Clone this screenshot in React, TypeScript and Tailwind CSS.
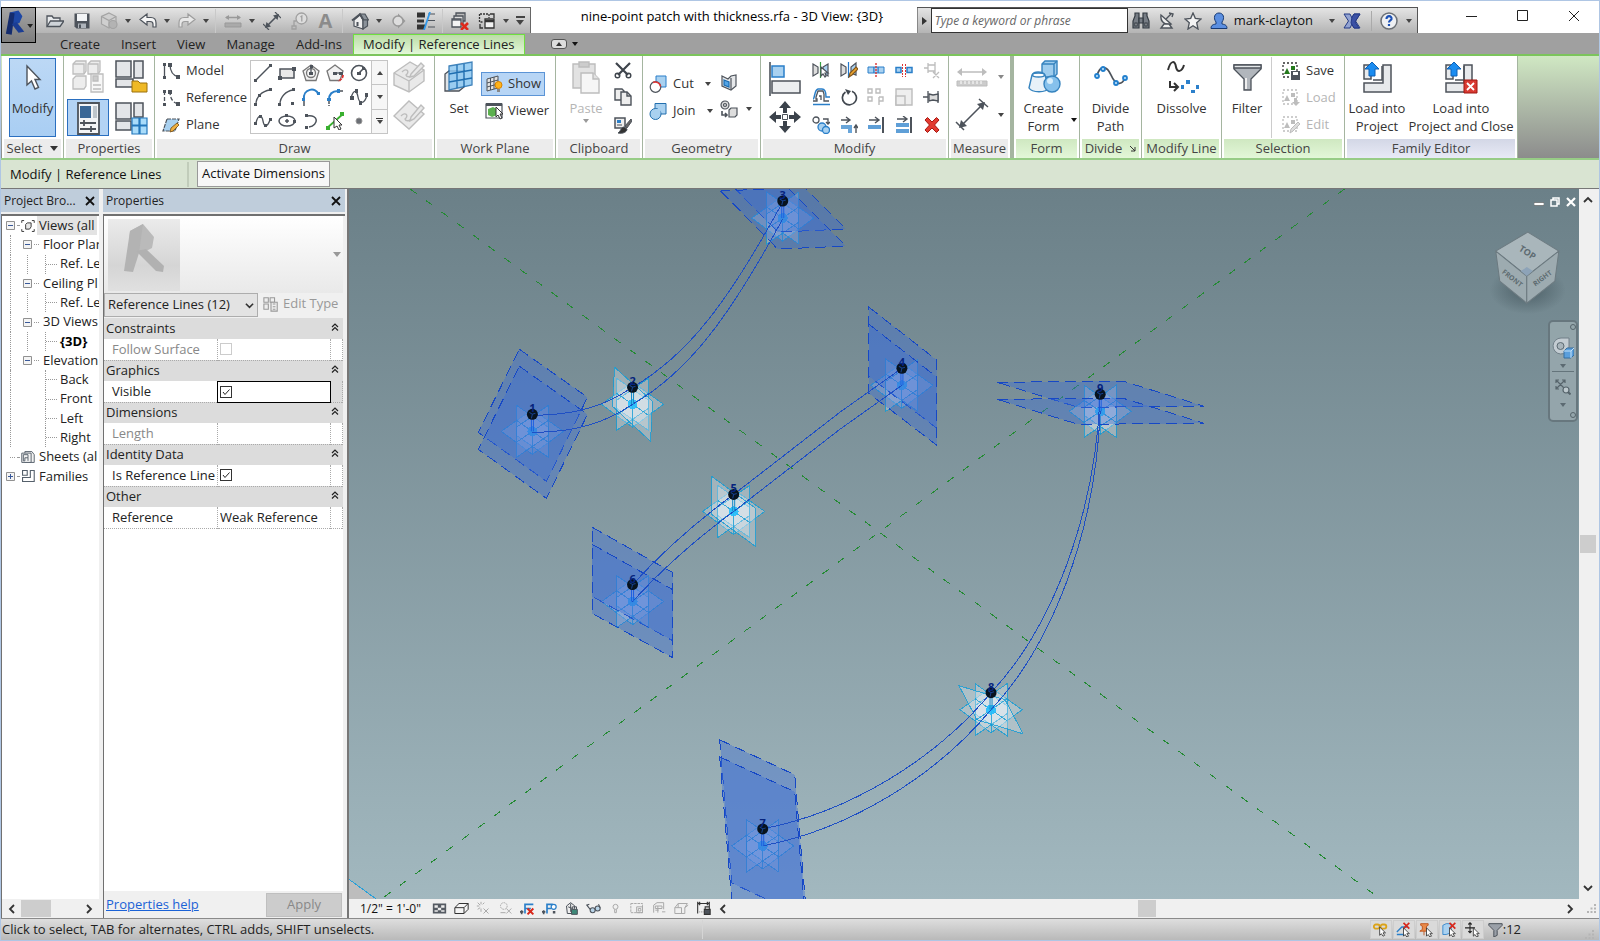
import React, { useState } from 'react';
import type { ReactNode } from 'react';

const D = '#4d535b';
const B = '#2a7fc9';
const L = '#a9d1f0';
const G = '#bdbdbd';

// Small icons are drawn on an 18x18 grid
const small: { [name: string]: ReactNode } = {
  open: <g stroke={D} strokeWidth="1.3"><path d="M1 14V4h5l1.5 2H14v3" fill="#e8eaec" /><path d="M1 14.5 4.5 9H18l-4 5.5z" fill="#cfd4d9" /></g>,
  save: <g><path d="M1.5 1.5h15v15h-13l-2-2z" fill={D} /><path d="M4 2h10v7H4z" fill="#f2f4f6" /><path d="M5 11.500h8V16H5z" fill="#aeb4bb" /><path d="M6 12.500h2V16H6z" fill={D} /></g>,
  cube: <g stroke="#a3a3a3" strokeWidth="1.2" fill="#cfcfcf"><path d="M9 1 16 4.500V12L9 16 1.500 12V4.500z" /><path d="M1.500 4.500 9 8.500l7-4M9 8.500V16" fill="none" /><circle cx="13" cy="12.500" r="4" fill="#b3b3b3" /></g>,
  undo: <path d="M1 7.500 8 2v3.500h4c3.500 0 5 2 5 5.500V15h-3v-3c0-2-1-2.500-3-2.500H8V13z" fill="#f5f5f5" stroke={D} strokeWidth="1.200" />,
  redo: <path d="M17 7.500 10 2v3.500H6c-3.500 0-5 2-5 5.500V15h3v-3c0-2 1-2.500 3-2.500h3V13z" fill="#e8e8e8" stroke="#9d9d9d" strokeWidth="1.200" />,
  dimension: <g stroke="#999" fill="#999"><path d="M2 5.500h14" strokeWidth="1.500" /><path d="M1 5.500 5 3v5zM17 5.500 13 3v5z" stroke="none" /><path d="M1 11h16v4H1z" strokeWidth="1" fill="#aaa" /></g>,
  diagonal: <g stroke={D} fill={D}><path d="M3.500 14.500l11-11" strokeWidth="1.600" /><path d="M2 16l1.500-6L8 14.500zM16 2l-6 1.500L14.500 8z" stroke="none" /><path d="M0 12l6 6M12 0l6 6" strokeWidth="1.200" /></g>,
  tag: <g stroke="#a0a0a0" fill="none" strokeWidth="1.300"><circle cx="11.500" cy="6.500" r="5.500" fill="#ddd" /><path d="M6 9H4v5M2 14h4v3H2zM10.500 5l1.300-1v5.500" /></g>,
  home: <g stroke={D} strokeWidth="1.200"><path d="M3 8 9 3l3 5v9l-9-3z" fill="#eee" /><path d="M9 2h5l3.500 6H12z" fill="#8b929a" /><path d="M12 8h4.500v6L12 17z" fill="#8b929a" /><path d="M1 8.500 9 2l3.500 6" fill="none" strokeWidth="1.800" /><path d="M6.500 10v4" strokeWidth="2" /></g>,
  section: <g><path d="M8 1.500 15.500 9 8 16.500z" fill="#999" /><circle cx="8" cy="9" r="5" fill="#ddd" stroke="#999" strokeWidth="1.500" /></g>,
  thin: <g><path d="M0 3h8M0 15h8" stroke="#333" strokeWidth="5" /><path d="M0 9h7" stroke="#333" strokeWidth="3" /><path d="M11 2h7M11 8.500h7M11 15h7" stroke={D} strokeWidth="1.200" /><path d="M13 0 7 18" stroke="#3399ea" strokeWidth="1.800" /></g>,
  closeWins: <g stroke={D} strokeWidth="1.300"><path d="M5 1h9v8H5z" fill="#bbb" /><path d="M3 4h9v8H3z" fill="#ddd" /><path d="M1 7h9v8H1z" fill="#f4f4f4" /><path d="M1 8h9" /><path d="M10 11l7 7M17 11l-7 7" stroke="#de2a1c" strokeWidth="2.500" /></g>,
  switchWins: <g stroke="#333" strokeWidth="1.300" fill="#f2f2f2"><path d="M7 7h9v9H7z" /><path d="M7 9h9" strokeWidth="2.500" /><path d="M2 2h9v4M1.500 2v8H5" strokeDasharray="2 1" fill="none" /><path d="M12 2h4v4M2 12v4h3" fill="none" /></g>,
  binoculars: <g fill="#777d85" stroke="#333a42" strokeWidth="1.200"><path d="M1 16V9l2-5V1h4v15zM17 16V9l-2-5V1h-4v15z" /><path d="M7 6h4v5H7z" /><path d="M3 11h2v3H3zM13 11h2v3h-2z" fill="#eee" /></g>,
  dish: <g stroke={D} strokeWidth="1.400" fill="#eee"><path d="M3 3c-1 6 4 11 10 9z" /><path d="M8 7l5-5M3 16h11l-3-4H6z" /><path d="M11 1l4 1-1 3" fill="none" /></g>,
  star: <path d="M9 1l2.300 5.300L17 7l-4.300 3.700L14 17l-5-3.300L4 17l1.300-6.300L1 7l5.700-.7z" fill="#f3f3f3" stroke={D} strokeWidth="1.300" />,
  user: <g stroke="#173a75" strokeWidth="1"><path d="M1 16.500c0-4 3-4 5-4.500v-2C3 6 4.500 1 9 1s6 5 3 9v2c2 .5 5 .5 5 4.500z" fill="#5c8fe0" /></g>,
  exchange: <g stroke="#243a86" strokeWidth="1"><path d="M1 2h6l2 4 2-4h6l-4.500 7 4.500 7h-6l-2-4-2 4H1l4.500-7z" fill="#93a4d2" /><path d="M9 5l2-3h6l-5 8 4 6h-5l-3-5z" fill="#3b51a5" /></g>,
  help: <g><circle cx="9" cy="9" r="8" fill="#eef0f3" stroke="#6b7076" strokeWidth="1.500" /><path d="M6.500 7c0-4 5.500-3.500 5 0-.3 1.500-2.500 1.500-2.500 3.500M9 12v2" fill="none" stroke="#1b50b5" strokeWidth="2.200" /></g>,
  model: <g stroke={D} fill="none" strokeWidth="1.300"><path d="M2.500 2v13M8 2c0 8 3 12 9 13" /><path d="M1 1h3v3H1zM1 14h3v3H1zM6 1h4v4H6zM14 13h4v4h-4z" fill={D} stroke="none" /></g>,
  reference: <g stroke={D} fill="none" strokeWidth="1.300"><path d="M2.500 2v13M8 2c0 8 3 12 9 13" strokeDasharray="4 2" /><path d="M1 1h3v3H1zM1 14h3v3H1zM6 1h4v4H6zM14 13h4v4h-4z" fill={D} stroke="none" /></g>,
  plane: <g><path d="M5 3h12l-4 12H1z" fill={L} stroke={D} strokeDasharray="4 1" strokeWidth="1.200" /><path d="M8 16l1-4 6-5 2 2-6 6z" fill="#f0b040" stroke="#754d12" strokeWidth=".8" /></g>,
  line: <g><path d="M2 16 16 2" stroke={D} strokeWidth="1.500" /><path d="M0 15h3v3H0zM15 0h3v3h-3z" fill={D} /></g>,
  rect: <g><path d="M2 5h14v9H2z" fill="#e9e9e9" stroke={D} strokeWidth="1.500" /><path d="M0 12h4v4H0zM14 3h4v4h-4z" fill={D} /></g>,
  polyIn: <g fill="none" stroke="#777" strokeWidth="1.300"><path d="M9 1l8 6-3 9.500H4L1 7z" fill="#f2f2f2" /><circle cx="9" cy="9" r="4.500" /><path d="M9 3v6" stroke={D} /><path d="M7 8h4v3H7zM8 1h3v3H8z" fill={D} stroke="none" /></g>,
  polyOut: <g fill="none" stroke="#777" strokeWidth="1.300"><path d="M9 1l8 6-3 9.500H4L1 7z" fill="#f2f2f2" /><path d="M9 9h6" stroke={D} /><path d="M7 8h4v3H7zM13 8h4v3h-4z" fill={D} stroke="none" /><path d="M17 11c0 3-2 5-5 6" stroke="#e03030" strokeWidth="1.800" strokeDasharray="3 1" /></g>,
  circle: <g fill="none" stroke={D} strokeWidth="1.600"><circle cx="9" cy="9" r="7.500" /><path d="M9 9l5-5" /><path d="M7 8h4v3H7zM12 3h3v3h-3z" fill={D} stroke="none" /></g>,
  arcSer: <g fill="none" stroke={D} strokeWidth="1.400"><path d="M2 16C2 9 8 3 16 2" /><path d="M0 15h3v3H0zM15 0h3v3h-3zM4 6h3v3H4z" fill={D} stroke="none" /></g>,
  arcCenter: <g fill="none" stroke={D} strokeWidth="1.400"><path d="M2 16C2 9 8 3 15 2" /><path d="M0 15h3v3H0zM14 0h3v3h-3zM13 14h3v3h-3z" fill={D} stroke="none" /></g>,
  tangent: <g fill="none" strokeWidth="1.500"><path d="M2 12C0 0 15-1 16 6" stroke={B} strokeWidth="2" /><path d="M2 13v5" stroke={D} /><path d="M0 10h3v3H0zM15 4h3v3h-3z" fill={B} /></g>,
  fillet: <g fill="none" strokeWidth="1.500"><path d="M3 12C3 6 6 3 12 3" stroke={B} strokeWidth="2" /><path d="M3 13v5M14 3h4" stroke={D} strokeDasharray="3 1" /><path d="M1 10h4v3H1zM11 1h3v4h-3z" fill={B} /></g>,
  spline: <g fill="none" stroke={D} strokeWidth="1.300"><path d="M1 10C4 0 7 3 8 9s6 9 9-2" /><path d="M0 8h4v4H0zM5 1h3v4H5zM9 13h3v4H9zM15 5h3v4h-3z" fill={D} stroke="none" /></g>,
  splinePts: <g fill="none" stroke={D} strokeWidth="1.400"><path d="M2 11C4 2 8 3 9 9s4 7 7-1" /><path d="M0 10h3v3H0zM5 3h3v3H5zM10 12h3v3h-3zM15 6h3v3h-3z" fill={D} stroke="none" /></g>,
  ellipse: <g fill="none" stroke={D} strokeWidth="1.500"><ellipse cx="9" cy="9" rx="8" ry="5" /><path d="M7 9h4M9 7v4" /><path d="M7 2h3v3H7zM15 8h3v3h-3z" fill={D} stroke="none" /></g>,
  partEllipse: <g fill="none" stroke={D} strokeWidth="1.500"><path d="M5 4c12-2 12 9 2 11" /><path d="M3 2h3v3H3zM3 14h3v3H3z" fill={D} stroke="none" /></g>,
  pick: <g><path d="M1 16 17 2" stroke="#39b02f" strokeWidth="1.800" /><path d="M0 14h4v4H0zM14 0h4v4h-4z" fill="#39b02f" /><path d="M8 5v11l3-2 2 4 2-1-2-4h3z" fill="#fff" stroke="#333" /></g>,
  point: <circle cx="9" cy="9" r="3" fill="#6b6f75" stroke="#999" />,
  show: <g stroke={D} fill="#e2e2e2"><path d="M2 4l11-3v12L2 16z" /><path d="M5.500 3v12M9 2v12M2 8l11-3M2 12l11-3" /><circle cx="13.500" cy="10" r="3.500" fill="#ffb31a" stroke="#d98200" /><path d="M12 14h3v3h-3z" fill="#888" stroke="none" /></g>,
  viewer: <g><path d="M1 2h16v14H1z" fill="#fff" stroke={D} strokeWidth="1.200" /><path d="M1 1h16v3H1z" fill={D} /><path d="M3 7l5-2 4 2v6l-5 2-4-2z" fill="#5cb04f" /><path d="M11 5v10l2-2 2 4 2-1-2-4h3z" fill="#fff" stroke="#333" /></g>,
  cut: <g stroke="#3e444c" strokeWidth="1.400" fill="none"><path d="M2 2l12 12M16 2 4 14" strokeWidth="2.200" /><circle cx="3.500" cy="14.500" r="2.300" /><circle cx="14.500" cy="14.500" r="2.300" /></g>,
  copy: <g stroke={D} strokeWidth="1.400" fill="#eee"><path d="M1 1h7l2 2v9H1z" /><path d="M7 4h6l4 4v9H7z" /><path d="M13 4v4h4" fill="none" /></g>,
  brush: <g stroke={D}><path d="M1 2h10v10H1z" fill="#eee" strokeWidth="1.500" /><path d="M3 4h4v3H3z" fill={B} stroke="none" /><path d="M3 9h5" /><path d="M17 3 11 10l2 2 5-7z" fill="#666" /><path d="M10 11c-3 0-3 4-6 6 5 1 9-1 9-4z" fill="#333" /></g>,
  cutGeo: <g><path d="M7 1h10v11H7z" fill={L} stroke={B} /><circle cx="6.500" cy="12" r="5.300" fill="#fff" stroke={D} strokeWidth="1.200" /><path d="M4 7.500a5.300 5.300 0 0 1 7.500 4" fill="none" stroke="#e23535" strokeWidth="1.600" /></g>,
  joinGeo: <g fill={L} stroke="#226fae"><path d="M6 1.500h11V12H6z" /><circle cx="6.500" cy="12" r="5.500" /><path d="M7 7h4.500v4.500H7z" stroke="none" /></g>,
  face: <g stroke={D} strokeWidth="1.200"><path d="M2 3l6 3 3-3 5-1v11l-5 4-9-4z" fill="#e6e8ea" /><path d="M11 5v11" /><path d="M4 7l5 2v5l-5-2z" fill="#52a4e6" stroke="#1a6bb0" /></g>,
  paint: <g stroke={D} fill="#ddd" strokeWidth="1.200"><circle cx="5" cy="5" r="4" /><circle cx="5" cy="5" r="1.500" /><path d="M9 10l2-2h6v7l-2 2H9z" /><path d="M2 11v4h4M5 13l2 2-2 2" fill="none" strokeWidth="1.600" /></g>,
  mirrorPick: <g stroke={D} strokeWidth="1.200" fill="#ddd"><path d="M1 3l5 3v6l-5 3z" /><path d="M16 3l-5 3v6l5 3z" fill={L} /><path d="M8.500 1v16" stroke="#35a043" /><path d="M9 6v9l2-2 2 3 1-1-1-3h3z" fill="#fff" /></g>,
  mirrorDraw: <g stroke={D} strokeWidth="1.200" fill="#ddd"><path d="M1 3l5 3v6l-5 3z" /><path d="M16 2l-5 4v6l5 2z" fill={L} /><path d="M8.500 1v16" stroke="#2277cc" /><path d="M9 16l1-4 6-6 2 2-6 6z" fill="#eea72f" stroke="#82551b" /></g>,
  split: <g><path d="M1 6h6v6H1zM11 6h6v6h-6z" fill={L} stroke={B} /><path d="M7 6h4v6H7z" fill={L} stroke={B} /><path d="M9 2v14" stroke="#d33" strokeWidth="1.400" strokeDasharray="2 1" /></g>,
  splitGap: <g><path d="M1 6.500h5v5H1zM12 6.500h5v5h-5z" fill={L} stroke={B} strokeWidth="1.500" /><path d="M7.500 3v13M10.500 3v13" stroke="#d33" strokeDasharray="2 1" /></g>,
  unpin: <g stroke={G} fill="none" strokeWidth="1.300"><path d="M1 7h4M5 2v10M12 1v12M5 4h7M5 10h7M10 11l6 6M16 11l-6 6" /></g>,
  offset: <g fill="none" strokeWidth="1.300"><path d="M1 13h4v-2H4V9l2-6h5l1 3v7h5" stroke={D} /><path d="M1 16.500h17M1 11c2 0 1-9 5-10h4c3 0 4 3 4 8h4" stroke={B} strokeWidth="1.500" /><path d="M7 8h2v4" stroke={D} /></g>,
  rotate: <g fill="none" stroke="#41474f" strokeWidth="1.700"><path d="M5.500 4A7 7 0 1 0 12 3.300" /><path d="M5 1l6 2-3 4z" fill="#41474f" stroke="none" /></g>,
  array: <g fill="none" stroke={G} strokeWidth="1.400"><path d="M1 1h4v4H1zM9 1h4v4H9zM1 9h4v4H1zM12 9v8M12 9h4v4h-4" /></g>,
  scale: <g fill="#eee" stroke={G} strokeWidth="1.400"><path d="M1 1h16v16H1z" /><path d="M1 8h9v9H1z" /></g>,
  pin: <g stroke={D} fill="#ddd" strokeWidth="1.300"><path d="M0 9h5M5 3v12M15 3v12" /><path d="M6 6l4 1 5-1v7l-5-1-4 1z" /></g>,
  copyGeo: <g fill="none" strokeWidth="1.300"><circle cx="4" cy="4" r="3" stroke={D} /><path d="M11 3h5v4M14 6l2 2 2-2" stroke={D} /><circle cx="10" cy="11" r="4" fill={L} stroke={B} /><circle cx="14" cy="14" r="3.500" fill={L} stroke={B} /></g>,
  trim: <g><path d="M1 4h8M6 1l4 3-4 3" stroke={D} fill="none" strokeWidth="1.400" /><path d="M1 9h11v8H8v-4H1z" fill={B} opacity=".7" /><path d="M16 17v-7M14 12l2-3 2 3" stroke={D} fill="none" strokeWidth="1.400" /></g>,
  trimOne: <g><path d="M2 4h9M8 1l4 3-4 3" stroke={D} fill="none" strokeWidth="1.400" /><path d="M1 9h13v4H1z" fill={B} opacity=".75" /><path d="M15 1h2v16h-2z" fill={D} /></g>,
  trimMany: <g><path d="M2 3h9M8 0l4 3-4 3" stroke={D} fill="none" strokeWidth="1.400" /><path d="M1 7h13v4H1zM1 13h13v4H1z" fill={B} opacity=".75" /><path d="M15 1h2v16h-2z" fill={D} /></g>,
  remove: <path d="M2 4l2.500-2.500L9 6l4.500-4.500L16 4l-4.500 5 4.500 5-2.500 2.500L9 12l-4.500 4.500L2 14l4.500-5z" fill="#e23a30" stroke="#a8170f" />,
  selSave: <g><path d="M1 1h14v14H1z" fill="none" stroke="#333" strokeWidth="1.300" strokeDasharray="2 2" /><path d="M2 12l3-6 3 6z" fill="#257a1d" /><path d="M9 4h4v4H9z" fill="#257a1d" /><path d="M9 9h9v9H9z" fill={D} /><path d="M11 10h5v3h-5z" fill="#fff" /></g>,
  selLoad: <g><path d="M1 1h14v14H1z" fill="none" stroke={G} strokeWidth="1.300" strokeDasharray="2 2" /><path d="M2 12l3-6 3 6zM9 4h4v4H9zM12 9h3v4h3l-4 4-4-4h2z" fill={G} /></g>,
  selEdit: <g><path d="M1 1h14v14H1z" fill="none" stroke={G} strokeWidth="1.300" strokeDasharray="2 2" /><path d="M2 12l3-6 3 6zM9 4h4v4H9z" fill={G} /><path d="M8 17l1-4 7-7 2 2-7 7z" fill="#ddd" stroke={G} /></g>,
  views: <g fill="none" stroke="#333" strokeWidth="1.200"><path d="M1 5V2h3M14 2h3v3M1 13v3h3M14 16h3v-3" /><path d="M6 7l2-2h5v5l-2 3H6z" fill="#e8e8e8" /></g>,
  sheets: <g fill="#f2f2f2" stroke="#55606b" strokeWidth="1.200"><path d="M5 2h9l3 4v10H5z" /><path d="M1 4h12v12H1z" /><path d="M3 6h6v4H5v4H3zM9 10v4" fill="none" /></g>,
  families: <g fill="none" stroke="#55606b" strokeWidth="1.400"><path d="M2 2h6v6H2zM2 11h10V2h5v14H2z" /></g>,
  editType: <g fill="#eee" stroke="#999" strokeWidth="1.200"><path d="M1 2h5v5H1zM8 2h5v5H8zM1 9h5v6H1z" /><path d="M9 7h7v10H9zM11 9h3M11 12h3M11 15h3" /></g>,
  detail: <g fill="#555b63"><path d="M1 3h16v12H1z" /><path d="M3 5h4v3H3zM11 5h4v3h-4zM7 8h4v3H7zM3 11h4v2H3zM11 11h4v2h-4z" fill="#eee" /></g>,
  visual: <path d="M1 8l5-5h11v7l-5 5H1zM1 8h11v7M12 8l5-5" fill="#f5f5f5" stroke="#333" strokeWidth="1.200" />,
  sun: <g stroke="#aaa" strokeWidth="1.200" fill="none"><path d="M6 1v3M1 6h3M2 2l3 3M10 2 8 4M2 10l3-2M6 9v4" /><path d="M9 9l6 6M15 9l-6 6" /></g>,
  shadow: <g stroke="#aaa" strokeWidth="1.200" fill="none"><circle cx="7" cy="6" r="4" strokeDasharray="2 1" /><path d="M3 14h6M10 9l6 6M16 9l-6 6" /></g>,
  crop: <g fill="none" strokeWidth="2"><path d="M6 15V4h10M6 9h7" stroke={B} /><path d="M0 13h4M2 11v5" stroke={D} /><path d="M9 9l7 7M16 9l-7 7" stroke="#d8281c" strokeWidth="2.400" /></g>,
  cropShow: <g fill="none" strokeWidth="2"><path d="M6 15V4h7M6 9h5" stroke={B} /><path d="M0 13h4M2 11v5" stroke={D} /><circle cx="14" cy="7" r="3" fill="#fff" stroke={B} strokeWidth="1.500" /><path d="M13 12h3v3h-3z" fill={D} /></g>,
  lockView: <g stroke={D} strokeWidth="1.200" fill="#eee"><path d="M3 6l5-4 5 4-2 9H4z" /><path d="M5 7l5 2M8 3v10" /><path d="M9 10h7v6H9z" fill="#3e8878" /><path d="M10 10V7h5v3" fill="none" /></g>,
  glasses: <g fill="#b9d4e8" stroke={D} strokeWidth="1.300"><circle cx="8" cy="11" r="3" /><circle cx="14" cy="9" r="3" /><path d="M5 10 1 5l3-1M17 8l-2-4" fill="none" /></g>,
  bulb: <g fill="none" stroke="#aaa" strokeWidth="1.200"><circle cx="9" cy="7" r="3" /><path d="M8 10v4h2v-4" /></g>,
  worksheet: <g fill="none" stroke="#aaa" strokeWidth="1.200"><path d="M1 3h14v11H1z" strokeDasharray="3 1" /><path d="M8 7h7v7H8zM10 9h3v3h-3z" /></g>,
  analytic: <g fill="none" stroke="#aaa" strokeWidth="1.200"><path d="M2 14V5l4-3h8v8M4 6h8v3H4zM4 11h4M7 6v8M12 13h4" /></g>,
  boxes: <g fill="none" stroke="#aaa" strokeWidth="1.200"><path d="M1 8l4-5h11l-3 5v7H1zM1 8h8v7M5 8V3M13 8l4-3" /></g>,
  constrain: <g fill="none" stroke="#333" strokeWidth="1.300"><path d="M2 1v14M16 1v6M3 3h12M5 1 3 3l2 2M13 1l2 2-2 2" /><path d="M4 13h5" stroke="#999" strokeDasharray="1 1" /><path d="M10 10h7v6h-7z" fill={D} /><path d="M11 10V7h5v3" /></g>,
  stLinks: <g><rect x="1" y="3" width="7" height="5" rx="2.500" stroke="#dba319" strokeWidth="2.200" /><rect x="9" y="3" width="7" height="5" rx="2.500" stroke="#dba319" strokeWidth="2.200" /><path d="M8 6v10l2-2 2 3 2-1-2-3h3z" fill="#fff" stroke="#333" /></g>,
  stUnder: <g><path d="M1 12l6-6h7M1 15h10" stroke={B} fill="none" strokeWidth="1.600" /><path d="M9 1l7 7M16 1 9 8" stroke="#d8281c" strokeWidth="2" /><path d="M9 7v10l2-2 2 3 2-1-2-3h3z" fill="#fff" stroke="#333" /></g>,
  stPin: <g><path d="M2 2h9v2L9 5v4l3 2H1l3-2V5L2 4zM6 11v5" fill="#e98a4a" stroke="#bd4c12" /><path d="M9 7v10l2-2 2 3 2-1-2-3h3z" fill="#fff" stroke="#333" /></g>,
  stFace: <g><path d="M1 4l4-2h6v11l-6 2H1z" fill={L} stroke={B} /><path d="M9 1l7 7M16 1 9 8" stroke="#d8281c" strokeWidth="2" /><path d="M9 7v10l2-2 2 3 2-1-2-3h3z" fill="#fff" stroke="#333" /></g>,
  stDrag: <g><path d="M6 1v12M0 7h12M4 3l2-2 2 2M4 11l2 2 2-2" stroke="#222" fill="none" strokeWidth="1.300" /><path d="M10 7v10l2-2 2 3 2-1-2-3h3z" fill="#fff" stroke="#333" /></g>,
  stFilter: <path d="M1 2h16v2l-6 6v6l-4 2v-8L1 4z" fill="#9aa0a8" stroke={D} strokeWidth="1.200" />,
};

// Large icons are drawn on a 34x34 grid
const large: { [name: string]: ReactNode } = {
  cursor: <path d="M11 5v19l4.500-4 3.500 8 3.500-1.500-3.500-8h5z" fill="#fff" stroke={D} strokeWidth="1.400" />,
  typeProps: <g fill="#ededed" stroke={G} strokeWidth="1.300"><path d="M2 5l3-3h10v10l-2 3H2zM17 5l3-3h9v10l-2 3H17zM2 20l3-3h10v10l-2 3H2z" /><path d="M2 5h11v10M17 5h10v9" fill="none" /><path d="M20 15h12v18H20z" fill="#f7f7f7" /><path d="M22 17h5v5h-5zM22 26h8M22 30h8" fill="#ccc" /></g>,
  famCat: <g stroke={D} strokeWidth="1.500" fill="#e3e5e8"><path d="M2 2h15v16H2z" /><path d="M2 20h17v8H2z" /><path d="M20 2h9v17h-9z" /><path d="M18 22h6l2 2h7v9H18z" fill="#efb926" stroke="#9b700d" strokeWidth="1" /></g>,
  propsPane: <g><path d="M7 2h21v31H7z" fill="#f3f4f6" stroke={D} strokeWidth="1.800" /><path d="M9 5h11v12H9z" fill="#3a6796" /><path d="M22 5h4v12h-4z" fill="#bfc6cc" /><path d="M9 22h16M9 28h16M13 19v6M20 25v6" stroke={D} strokeWidth="1.800" /></g>,
  famTypes: <g stroke={D} strokeWidth="1.500" fill="#e3e5e8"><path d="M2 2h15v16H2z" /><path d="M2 20h15v9H2z" /><path d="M20 2h9v14h-9z" /><g fill="#a9dcfa" stroke="#2377bb" strokeWidth="1.200"><path d="M18 17h7v7h-7zM26 17h7v7h-7zM18 25h7v8h-7zM26 25h7v8h-7z" /></g></g>,
  drawFace: <g fill="#e9e9e9" stroke={G} strokeWidth="1.400"><path d="M2 13 18 2l14 8v11L17 32 2 25z" /><path d="M2 13l15 8 15-11M17 21v11" fill="none" /><path d="M10 12c5-5 8 0 4 3 1 3 5 2 8-1" fill="none" /><path d="M19 14 29 3l3 3-10 10-4 1z" /></g>,
  drawPlane: <g fill="#e9e9e9" stroke={G} strokeWidth="1.400"><path d="M2 18 17 3l15 13-15 15z" /><path d="M9 18c5-5 8 0 4 3 1 3 5 2 8-1" fill="none" /><path d="M19 19 29 7l3 3-10 11-4 2z" /></g>,
  set: <g stroke="#1f6eb0" strokeWidth="1.300"><path d="M3 14l4-3h15v16l-5 4H3z" fill="#dfe3e6" stroke={D} /><path d="M7 6l23-4v23L7 30z" fill="#8dc8f2" opacity=".85" /><path d="M15 5v23M22 4v23M7 14l23-4M7 22l23-4" fill="none" /></g>,
  paste: <g fill="#e2e2e2" stroke={G} strokeWidth="1.400"><path d="M4 4h22v24H4z" /><path d="M10 2h10v5H10z" fill="#ccc" /><path d="M12 13h12l6 6v14H12z" fill="#f6f6f6" /><path d="M24 13v6h6" /></g>,
  align: <g><path d="M2 0v34" stroke={D} strokeWidth="1.600" /><path d="M4 4h12v11H4z" fill={L} stroke={B} strokeWidth="1.500" /><path d="M4 19h28v12H4z" fill="#eceef0" stroke={D} strokeWidth="1.500" /></g>,
  move: <g fill="#3b424b"><path d="M17 1l6 7h-4v5h-4V8h-4zM17 33l6-7h-4v-5h-4v5h-4zM1 17l7-6v4h5v4H8v4zM33 17l-7-6v4h-5v4h5v4z" /><path d="M14.500 14.500h5v5h-5z" fill="#fff" stroke={D} /></g>,
  measure: <g stroke={G} fill={G}><path d="M4 12h26" strokeWidth="1.500" /><path d="M2 12l5-4v8zM32 12l-5-4v8z" stroke="none" /><path d="M2 21h30v5H2z" strokeWidth="1" fill="#ccc" /><path d="M6 21v3M10 21v3M14 21v3M18 21v3M22 21v3M26 21v3" stroke="#fff" /></g>,
  aligned: <g stroke={D} fill={D}><path d="M6 28 28 6" strokeWidth="1.600" /><path d="M4 30l2-8 6 6zM30 4l-8 2 6 6z" stroke="none" /><path d="M1 24l8 8M24 1l9 8" strokeWidth="1.500" /></g>,
  form: <g stroke="#3683be" strokeWidth="1.400"><path d="M15 4l3-3h12v13l-3 3H15z" fill="#9fcdee" /><path d="M15 4h12v13M27 4l3-3" fill="none" /><path d="M5 15c2-4 10-4 13 0l4 13c-3 5-17 5-20 0z" fill="#e8f1f8" /><ellipse cx="11.500" cy="15" rx="6" ry="2" fill="#fff" /><circle cx="25" cy="24" r="8" fill="#86c1ec" /><circle cx="23" cy="21" r="3" fill="#d6edfb" stroke="none" /></g>,
  divide: <g fill="none" stroke={D} strokeWidth="1.800"><path d="M3 16C6 4 13 6 17 15s10 12 14 3" /><g fill="#bfe1fa" stroke="#2380ce"><circle cx="3" cy="16" r="2" /><circle cx="9" cy="9" r="2" /><circle cx="22" cy="23" r="2" /><circle cx="31" cy="18" r="2" /></g></g>,
  dissolve: <g fill="none" stroke="#333" strokeWidth="2"><path d="M3 10C6-1 10 1 11 7s6 5 8-2" /><path d="M5 21v6h7M9 23l4 4-4 4" /><g fill="#2c80cb" stroke="none"><path d="M16 25h3v4h-3zM21 20h4v4h-4zM26 30h4v3h-4zM31 25h3v4h-3z" /></g></g>,
  filter: <g stroke={D} strokeWidth="1.300"><path d="M4 5h27v4L21 19v11h-7V19L4 9z" fill="#b1b6bc" /><path d="M4 5h27v3H4z" fill="#e5e8ea" /><path d="M16 18v11" stroke="#eee" strokeWidth="2" /></g>,
  load: <g stroke={D} strokeWidth="1.500" fill="#e8eaec"><path d="M4 5h7v14H4zM23 5h8v27H4v-9h19z" fill="#e8eaec" /><path d="M13 20h9V6" fill="none" /><path d="M12 2l7 7h-4v7H9V9H5z" fill="#1b8cf0" stroke="#0e61b5" strokeWidth="1" /></g>,
  loadClose: <g stroke={D} strokeWidth="1.500" fill="#e8eaec"><path d="M2 5h7v14H2zM20 5h8v27H2v-9h18z" fill="#e8eaec" /><path d="M11 20h9V6" fill="none" /><path d="M10 2l7 7h-4v7H7V9H3z" fill="#1b8cf0" stroke="#0e61b5" strokeWidth="1" /><path d="M20 20h13v13H20z" fill="#d93a32" stroke="#9e1610" strokeWidth="1" /><path d="M23 23l7 7M30 23l-7 7" stroke="#fff" strokeWidth="1.800" /></g>,
};

function Icon({ name, className = 'w-[18px] h-[18px]' }: { name: string; className?: string }) {
  return <svg viewBox="0 0 18 18" className={`${className} shrink-0`} fill="none" aria-hidden="true">{small[name]}</svg>;
}

function BigIcon({ name }: { name: string }) {
  return <svg viewBox="0 0 34 34" className="w-[34px] h-[34px] shrink-0" fill="none" aria-hidden="true">{large[name]}</svg>;
}

function Caret({ color = '#444', className = '' }: { color?: string; className?: string }) {
  return <svg viewBox="0 0 6 4" className={`w-[6px] h-[4px] shrink-0 ${className}`} aria-hidden="true"><path d="M0 0h6L3 4z" fill={color} /></svg>;
}

function Chevron({ dir, className = 'w-[10px] h-[10px]' }: { dir: 'left' | 'right' | 'up' | 'down'; className?: string }) {
  const d = { left: 'M7 1 3 5l4 4', right: 'M3 1l4 4-4 4', up: 'M1 7l4-4 4 4', down: 'M1 3l4 4 4-4' }[dir];
  return <svg viewBox="0 0 10 10" className={`${className} shrink-0`} fill="none" stroke="#333" strokeWidth="1.800" aria-hidden="true"><path d={d} /></svg>;
}

const quickAccess = ['open', 'save', 'cube', '>', 'undo', '>', 'redo', '>', '|', 'dimension', '>', 'diagonal', 'tag', 'A', '|', 'home', '>', 'section', 'thin', '|', 'closeWins', 'switchWins', '>'];

function TitleBar() {
  return (
    <header className="flex h-8 shrink-0 items-end bg-white">
      <div className="relative w-[35px] self-stretch">
        <button aria-label="Application menu" className="absolute top-[6px] left-0 z-10 flex h-9 w-[35px] items-center border border-black bg-linear-to-b from-[#a5a5a5] to-[#7d7d7d]">
          <svg viewBox="0 0 34 34" className="w-[34px] h-[34px]" aria-hidden="true">
            <path d="M8 4 17 2l4 6-3 7-7 2z" fill="#1d47a5" />
            <path d="M8 4 13 5 10 27l-6-1z" fill="#142c6e" />
            <path d="M10 16l5-2 8 10-6 1z" fill="#1b3d93" />
            <path d="M26 16h6l-3 4z" fill="#222" />
          </svg>
        </button>
      </div>
      <div className="flex h-[26px] items-center border-t border-r border-[#666] bg-linear-to-b from-[#e4e4e4] to-[#b4b4b4] pl-[5px] pr-[2px]">
        {quickAccess.map((item, i) => {
          if (item === '>') return <button key={i} aria-label="More" className="flex w-3 justify-center"><Caret /></button>;
          if (item === '|') return <span key={i} className="mx-[3px] h-6 w-px bg-[#c9c9c9]" />;
          if (item === 'A') return <button key={i} aria-label="Text" className="w-[27px] text-center text-[20px] leading-[22px] font-bold text-[#8b8b8b]">A</button>;
          return <button key={i} aria-label={item} className="flex w-[27px] justify-center"><Icon name={item} /></button>;
        })}
        <button aria-label="Customize" className="flex w-4 flex-col items-center gap-[2px]">
          <span className="h-[2px] w-[9px] bg-[#444]" />
          <svg viewBox="0 0 8 5" className="w-2 h-[5px]"><path d="M0 0h8L4 5z" fill="#444" /></svg>
        </button>
      </div>
      <h1 className="flex-1 self-center pl-4 text-center text-[13px] text-black">nine-point patch with thickness.rfa - 3D View: &#123;3D&#125;</h1>
      <div className="flex h-[26px] items-center border-t border-r border-[#555] bg-linear-to-b from-[#e4e4e4] to-[#b4b4b4]">
        <button aria-label="Collapse search" className="flex h-full w-[14px] items-center justify-center border-l border-[#888]">
          <svg viewBox="0 0 5 8" className="h-2 w-[5px]"><path d="M0 0l5 4-5 4z" fill="#333" /></svg>
        </button>
        <input aria-label="Search" placeholder="Type a keyword or phrase" className="h-[25px] w-[197px] border border-[#333] bg-white px-[3px] text-[12px] italic placeholder:text-[#666]" />
        <button aria-label="Find" className="flex w-[26px] justify-center"><Icon name="binoculars" /></button>
        <button aria-label="Communication center" className="flex w-[26px] justify-center"><Icon name="dish" /></button>
        <button aria-label="Favorites" className="flex w-[26px] justify-center"><Icon name="star" /></button>
        <button className="flex items-center gap-[6px] px-1 text-[13px] text-[#111]"><Icon name="user" />mark-clayton<Caret className="ml-[10px]" /></button>
        <button aria-label="Exchange" className="flex w-[26px] justify-center"><Icon name="exchange" /></button>
        <span className="ml-[6px] h-5 w-px bg-[#aaa]" />
        <button aria-label="Help" className="ml-2 flex items-center gap-2 pr-[5px]"><Icon name="help" /><Caret /></button>
      </div>
      <div className="flex h-full w-[181px] items-center justify-end pb-[2px]">
        <button aria-label="Minimize" className="flex w-[51px] justify-center"><svg viewBox="0 0 12 12" className="w-3 h-3" stroke="#222" fill="none"><path d="M0 6.500h11" /></svg></button>
        <button aria-label="Maximize" className="flex w-[51px] justify-center"><svg viewBox="0 0 12 12" className="w-3 h-3" stroke="#222" fill="none"><path d="M.5.5h10v10H.5z" /></svg></button>
        <button aria-label="Close" className="flex w-[51px] justify-center"><svg viewBox="0 0 12 12" className="w-3 h-3" stroke="#222" fill="none"><path d="M1 1l10 10M11 1 1 11" /></svg></button>
      </div>
    </header>
  );
}

function TabBar() {
  return (
    <nav className="flex h-[21px] shrink-0 items-end bg-[#a0a0a0] pl-[59px] text-[13px] leading-[19px] text-[#222]">
      <div className="flex gap-[21px] pr-[11px]">
        {['Create', 'Insert', 'View', 'Manage', 'Add-Ins'].map(tab => <button key={tab}>{tab}</button>)}
      </div>
      <button className="h-5 border-x border-t border-[#6fe03f] bg-linear-to-b from-[#bcdca8] to-[#e3f8d8] px-[9px]">Modify | Reference Lines</button>
      <button aria-label="Minimize ribbon" className="mb-[5px] ml-[26px] flex h-[10px] w-4 items-center justify-center rounded-[3px] border border-[#555] bg-[#ddd]">
        <svg viewBox="0 0 6 4" className="w-[6px] h-1"><path d="M0 4h6L3 0z" fill="#333" /></svg>
      </button>
      <button aria-label="Ribbon options" className="mb-2 ml-[5px]"><Caret color="#111" /></button>
    </nav>
  );
}

type PanelTone = 'gray' | 'green' | 'blue';

function Panel({ title, className, tone = 'gray', children }: { title: ReactNode; className: string; tone?: PanelTone; children: ReactNode }) {
  const footer = { gray: 'bg-[#ececec]', green: 'bg-linear-to-b from-[#cfe8c1] to-[#e3f7d8]', blue: 'bg-linear-to-b from-[#d3d7e6] to-[#e8eaf6]' }[tone];
  return (
    <section className={`flex shrink-0 flex-col border-r border-[#a5b5a0] bg-white px-[2px] ${className}`}>
      <div className="flex min-h-0 flex-1">{children}</div>
      <h2 className={`flex h-[19px] items-center justify-center gap-2 text-[13px] leading-[19px] whitespace-nowrap text-[#444] ${footer}`}>{title}</h2>
    </section>
  );
}

function TallButton({ icon, lines, className, disabled = false, caret = false }: { icon: string; lines: string[]; className: string; disabled?: boolean; caret?: boolean }) {
  return (
    <button disabled={disabled} className={`flex flex-col items-center pt-1 text-[13px] leading-[18px] ${disabled ? 'text-[#b5b5b5]' : 'text-[#333]'} ${className}`}>
      <BigIcon name={icon} />
      <span className="mt-[5px] flex flex-col items-center">
        {lines.map(line => <span key={line} className="whitespace-nowrap">{line}</span>)}
      </span>
      {caret && <Caret color="#999" className="mt-[2px]" />}
    </button>
  );
}

const drawTools = ['line', 'rect', 'polyIn', 'polyOut', 'circle', 'arcSer', 'arcCenter', 'tangent', 'fillet', 'spline', 'splinePts', 'ellipse', 'partEllipse', 'pick', 'point'];
const modifyTools = ['mirrorPick', 'mirrorDraw', 'split', 'splitGap', 'unpin', 'offset', 'rotate', 'array', 'scale', 'pin', 'copyGeo', 'trim', 'trimOne', 'trimMany', 'remove'];

function Ribbon() {
  return (
    <div className="flex h-[106px] shrink-0 border-t-2 border-b-2 border-[#7cc45c] border-b-[#97cc86] bg-linear-to-b from-[#d0e8c3] to-[#8c8c8c] pl-px">
      <Panel className="w-[62px]" title={<>Select <svg viewBox="0 0 8 5" className="w-2 h-[5px]"><path d="M0 0h8L4 5z" fill="#333" /></svg></>}>
        <button className="mx-auto mt-[2px] flex h-[79px] w-[47px] flex-col items-center border border-[#2a6fc0] bg-linear-to-b from-[#bcd8f5] to-[#a9cef3] pt-[2px] text-[13px] text-[#333]">
          <BigIcon name="cursor" />
          <span className="mt-1">Modify</span>
        </button>
      </Panel>
      <Panel className="w-[91px]" title="Properties">
        <div className="grid w-full grid-cols-2 place-items-center">
          <button aria-label="Type properties" disabled><BigIcon name="typeProps" /></button>
          <button aria-label="Family category"><BigIcon name="famCat" /></button>
          <button aria-label="Properties palette" className="flex h-[37px] w-[42px] items-center justify-center border border-[#2a6fc0] bg-[#b3d3f4]"><BigIcon name="propsPane" /></button>
          <button aria-label="Family types"><BigIcon name="famTypes" /></button>
        </div>
      </Panel>
      <Panel className="w-[280px]" title="Draw">
        <div className="flex w-[93px] flex-col pt-px pl-[5px] text-[13px] text-[#333]">
          {[['model', 'Model'], ['reference', 'Reference'], ['plane', 'Plane']].map(([icon, text]) => (
            <button key={text} className="flex h-[27px] items-center gap-[6px]"><Icon name={icon} />{text}</button>
          ))}
        </div>
        <div className="mt-1 flex h-[74px] w-[138px] border border-[#c5c5c5]">
          <div className="grid w-[120px] grid-cols-5 place-items-center">
            {drawTools.map(tool => <button key={tool} aria-label={tool}><Icon name={tool} /></button>)}
          </div>
          <div className="flex flex-1 flex-col divide-y divide-[#c5c5c5] border-l border-[#c5c5c5] bg-[#f6f6f6]">
            <button aria-label="Scroll up" className="flex flex-1 items-center justify-center"><Caret className="rotate-180" /></button>
            <button aria-label="Scroll down" className="flex flex-1 items-center justify-center"><Caret /></button>
            <button aria-label="Expand" className="flex flex-1 flex-col items-center justify-center gap-px"><span className="h-px w-[7px] bg-[#333]" /><Caret /></button>
          </div>
        </div>
        <div className="flex flex-col gap-1 pt-1 pl-1">
          <BigIcon name="drawFace" />
          <BigIcon name="drawPlane" />
        </div>
      </Panel>
      <Panel className="w-[121px]" title="Work Plane">
        <TallButton icon="set" lines={['Set']} className="w-11" />
        <div className="flex w-16 flex-col gap-[3px] pt-4 text-[13px] text-[#333]">
          <button className="flex h-6 items-center gap-[5px] border border-[#5b94d6] bg-[#b7d5f5] pl-[3px]"><Icon name="show" />Show</button>
          <button className="flex h-6 items-center gap-[5px] pl-1"><Icon name="viewer" />Viewer</button>
        </div>
      </Panel>
      <Panel className="w-[87px]" title="Clipboard">
        <TallButton icon="paste" lines={['Paste']} className="w-[56px]" disabled caret />
        <div className="flex flex-col justify-around">
          {['cut', 'copy', 'brush'].map(name => <button key={name} aria-label={name}><Icon name={name} /></button>)}
        </div>
      </Panel>
      <Panel className="w-[118px]" title="Geometry">
        <div className="flex flex-1 flex-col gap-[3px] pt-4 pl-1 text-[13px] text-[#333]">
          <button className="flex h-6 items-center gap-[6px]"><Icon name="cutGeo" />Cut<Caret className="ml-[5px]" /></button>
          <button className="flex h-6 items-center gap-[6px]"><Icon name="joinGeo" />Join<Caret className="ml-[5px]" /></button>
        </div>
        <div className="flex w-[38px] flex-col gap-[3px] pt-[14px]">
          <button aria-label="Split face" className="flex h-6 items-center"><Icon name="face" /></button>
          <button aria-label="Paint" className="flex h-6 items-center gap-2"><Icon name="paint" /><Caret /></button>
        </div>
      </Panel>
      <Panel className="w-[188px]" title="Modify">
        <div className="flex w-11 flex-col items-center justify-center gap-1">
          <button aria-label="Align"><BigIcon name="align" /></button>
          <button aria-label="Move"><BigIcon name="move" /></button>
        </div>
        <div className="grid flex-1 grid-cols-5 place-items-center">
          {modifyTools.map(tool => <button key={tool} aria-label={tool}><Icon name={tool} /></button>)}
        </div>
      </Panel>
      <Panel className="w-[65px] border-r-4 border-[#9aa594]" title="Measure">
        <div className="flex flex-col gap-1 pt-1 pl-1">
          <button aria-label="Measure" className="flex items-center gap-[9px]"><BigIcon name="measure" /><Caret color="#888" /></button>
          <button aria-label="Aligned dimension" className="flex items-center gap-[9px]"><BigIcon name="aligned" /><Caret /></button>
        </div>
      </Panel>
      <Panel className="w-[66px]" tone="green" title="Form">
        <TallButton icon="form" lines={['Create', 'Form']} className="w-[55px]" />
        <Caret className="mt-[62px]" color="#111" />
      </Panel>
      <Panel className="w-[62px]" tone="green" title={<>Divide <svg viewBox="0 0 6 6" className="w-[6px] h-[6px]" stroke="#333" fill="none"><path d="M0 0l5 5M5 1v4H1" /></svg></>}>
        <TallButton icon="divide" lines={['Divide', 'Path']} className="flex-1" />
      </Panel>
      <Panel className="w-[80px]" tone="green" title="Modify Line">
        <TallButton icon="dissolve" lines={['Dissolve']} className="flex-1" />
      </Panel>
      <Panel className="w-[123px]" tone="green" title="Selection">
        <TallButton icon="filter" lines={['Filter']} className="w-[46px]" />
        <div className="my-px ml-px flex flex-1 flex-col border-l border-[#ccc] pl-[10px] text-[13px]">
          <button className="flex h-[27px] items-center gap-[6px] text-[#333]"><Icon name="selSave" />Save</button>
          <button disabled className="flex h-[27px] items-center gap-[6px] text-[#b5b5b5]"><Icon name="selLoad" />Load</button>
          <button disabled className="flex h-[27px] items-center gap-[6px] text-[#b5b5b5]"><Icon name="selEdit" />Edit</button>
        </div>
      </Panel>
      <Panel className="w-[173px]" tone="blue" title="Family Editor">
        <TallButton icon="load" lines={['Load into', 'Project']} className="w-[60px]" />
        <TallButton icon="loadClose" lines={['Load into', 'Project and Close']} className="flex-1" />
      </Panel>
    </div>
  );
}

interface TreeNode {
  text: string;
  depth: number;
  icon?: string;
  box?: '-' | '+';
  bold?: boolean;
}

const tree: TreeNode[] = [
  { text: 'Views (all', depth: 0, icon: 'views', box: '-' },
  { text: 'Floor Plar', depth: 1, box: '-' },
  { text: 'Ref. Le', depth: 2 },
  { text: 'Ceiling Pl', depth: 1, box: '-' },
  { text: 'Ref. Le', depth: 2 },
  { text: '3D Views', depth: 1, box: '-' },
  { text: '{3D}', depth: 2, bold: true },
  { text: 'Elevation', depth: 1, box: '-' },
  { text: 'Back', depth: 2 },
  { text: 'Front', depth: 2 },
  { text: 'Left', depth: 2 },
  { text: 'Right', depth: 2 },
  { text: 'Sheets (al', depth: 0, icon: 'sheets' },
  { text: 'Families', depth: 0, icon: 'families', box: '+' },
];

function ExpandBox({ sign }: { sign: '-' | '+' }) {
  return (
    <svg viewBox="0 0 9 9" className="w-[9px] h-[9px] shrink-0" aria-hidden="true">
      <path d="M.5.5h8v8h-8z" fill="#f4f4f4" stroke="#919191" />
      <path d={sign === '+' ? 'M2 4.500h5M4.500 2v5' : 'M2 4.500h5'} stroke="#3a5a9a" />
    </svg>
  );
}

function PaneHeader({ text }: { text: string }) {
  return (
    <div className="flex h-[23px] shrink-0 items-center justify-between bg-[#bfcddb] pr-1 pl-[3px] text-[12px] text-[#222]">
      <h2 className="whitespace-nowrap">{text}</h2>
      <button aria-label={`Close ${text}`}>
        <svg viewBox="0 0 10 10" className="w-[10px] h-[10px]" stroke="#111" strokeWidth="1.800"><path d="M1 1l8 8M9 1 1 9" /></svg>
      </button>
    </div>
  );
}

function ProjectBrowser() {
  return (
    <aside className="flex w-[98px] shrink-0 flex-col bg-[#f0f0f0]">
      <PaneHeader text="Project Bro..." />
      <div className="mt-[2px] min-h-0 flex-1 overflow-hidden border-t-2 border-l border-[#707070] bg-white">
        <ul className="grid h-[270px] grid-rows-14 text-[13px] text-[#222]">
          {tree.map((node, i) => (
            <li key={i} className="flex items-center whitespace-nowrap">
              {node.depth === 0 && <span className="flex w-[35px] shrink-0 items-center gap-[2px] pl-1">
                {node.box ? <ExpandBox sign={node.box} /> : <span className="ml-1 w-[5px] border-t border-dotted border-[#999]" />}
                <span className="w-[2px] border-t border-dotted border-[#999]" />
                <Icon name={node.icon!} className="w-[14px] h-[14px]" />
              </span>}
              {node.depth === 1 && <span className="flex h-full w-[39px] shrink-0 items-center gap-[2px] pl-2">
                <span className="h-full w-[11px] border-l border-dotted border-[#999]" />
                <ExpandBox sign="-" />
                <span className="w-[5px] border-t border-dotted border-[#999]" />
              </span>}
              {node.depth === 2 && <span className="flex h-full w-[56px] shrink-0 items-center pl-2">
                <span className={`h-full border-l border-dotted border-[#999] ${i < 7 ? 'w-[17px]' : 'w-[35px]'}`} />
                {i < 7 && <span className="h-full w-[18px] border-l border-dotted border-[#999]" />}
                <span className="h-full border-l border-dotted border-[#999]" />
                <span className="w-[11px] border-t border-dotted border-[#999]" />
              </span>}
              <span className={`px-[2px] ${i === 0 ? 'bg-[#e3e3e3]' : ''} ${node.bold ? 'font-bold text-black' : ''}`}>{node.text}</span>
            </li>
          ))}
        </ul>
      </div>
      <div className="flex h-[19px] items-center border-l border-[#707070] px-[5px]">
        <button aria-label="Scroll left"><Chevron dir="left" /></button>
        <span className="ml-1 h-[17px] w-[30px] bg-[#cdcdcd]" />
        <button aria-label="Scroll right" className="ml-auto"><Chevron dir="right" /></button>
      </div>
    </aside>
  );
}

interface Property {
  label: string;
  kind: 'check' | 'text';
  value?: string;
  checked?: boolean;
  disabled?: boolean;
  active?: boolean;
}

const groups: { title: string; row: Property }[] = [
  { title: 'Constraints', row: { label: 'Follow Surface', kind: 'check', disabled: true } },
  { title: 'Graphics', row: { label: 'Visible', kind: 'check', checked: true, active: true } },
  { title: 'Dimensions', row: { label: 'Length', kind: 'text', value: '', disabled: true } },
  { title: 'Identity Data', row: { label: 'Is Reference Line', kind: 'check', checked: true } },
  { title: 'Other', row: { label: 'Reference', kind: 'text', value: 'Weak Reference' } },
];

function CheckField({ id, initial, disabled }: { id: string; initial: boolean; disabled?: boolean }) {
  const [checked, setChecked] = useState(initial);
  return (
    <span className="relative block h-3 w-3">
      <input
        id={id}
        type="checkbox"
        checked={checked}
        disabled={disabled}
        onChange={(e) => setChecked(e.target.checked)}
        className="block h-3 w-3 appearance-none border border-[#333] bg-white disabled:border-[#ccc]"
      />
      {checked && <svg viewBox="0 0 12 12" className="pointer-events-none absolute inset-0 w-3 h-3" fill="none" stroke="#222"><path d="M3 6l2 2.500L9.500 3.500" /></svg>}
    </span>
  );
}

function PropertiesPane() {
  return (
    <aside className="ml-1 flex w-[242px] shrink-0 flex-col bg-[#f0f0f0]">
      <PaneHeader text="Properties" />
      <div className="mt-[2px] flex min-h-0 flex-1 flex-col border-t-2 border-l border-[#707070] pr-[2px]">
        <div className="flex h-[77px] shrink-0 items-center justify-between bg-linear-to-b from-white to-[#e9e9e9] pr-[2px] pl-1">
          <svg viewBox="0 0 72 72" className="w-[72px] h-[72px]" aria-hidden="true">
            <defs>
              <linearGradient id="thumb" x1="0" y1="0" x2="0" y2="1"><stop offset="0" stopColor="#ebebeb" /><stop offset=".65" stopColor="#d5d5d5" /><stop offset="1" stopColor="#e0e0e0" /></linearGradient>
            </defs>
            <path d="M0 0h72v72H0z" fill="url(#thumb)" />
            <path d="M22 12l13-7 11 13-2 11-6 3-18 2z" fill="#bababa" />
            <path d="M22 12l-6 40 9 1 6-19 4-29z" fill="#b3b3b3" />
            <path d="M28 32l10-2 18 17-1 6-7-1z" fill="#b1b1b1" />
          </svg>
          <svg viewBox="0 0 8 5" className="w-2 h-[5px]"><path d="M0 0h8L4 5z" fill="#999" /></svg>
        </div>
        <div className="flex h-[25px] shrink-0 items-start">
          <div className="relative h-6 w-[154px]">
            <select aria-label="Type selector" className="block h-full w-full appearance-none border border-[#adadad] bg-[#e3e3e3] px-[3px] text-[13px] text-[#222]">
              <option>Reference Lines (12)</option>
            </select>
            <span className="pointer-events-none absolute top-2 right-1"><Chevron dir="down" className="w-[9px] h-[9px]" /></span>
          </div>
          <button disabled className="flex h-[22px] flex-1 items-center gap-1 pl-[5px] text-[13px] whitespace-nowrap text-[#999]"><Icon name="editType" className="w-4 h-4" />Edit Type</button>
        </div>
        <div className="flex-1 bg-white">
          <table className="w-full table-fixed border-collapse text-[13px] leading-[19px] text-[#222]">
            <colgroup><col /><col className="w-[113px]" /><col className="w-[12px]" /></colgroup>
            {groups.map(({ title, row }) => (
              <tbody key={title}>
                <tr className="h-[21px] bg-[#dcdcdc]">
                  <th colSpan={2} className="p-0 pl-[2px] text-left font-normal">{title}</th>
                  <td className="p-0">
                    <button aria-label={`Collapse ${title}`} className="block pb-1">
                      <svg viewBox="0 0 8 8" className="w-2 h-2" fill="none" stroke="#222" strokeWidth="1.200"><path d="M1 4l3-3 3 3M1 7.500l3-3 3 3" /></svg>
                    </button>
                  </td>
                </tr>
                <tr className="h-[21px] border-b border-dotted border-[#aaa]">
                  <td className={`p-0 pl-2 whitespace-nowrap ${row.disabled ? 'text-[#888]' : ''}`}><label htmlFor={row.label}>{row.label}</label></td>
                  <td className={`border-x p-0 pl-[2px] ${row.active ? 'border border-solid border-black' : 'border-dotted border-[#aaa]'}`}>
                    {row.kind === 'check'
                      ? <CheckField id={row.label} initial={!!row.checked} disabled={row.disabled} />
                      : <input id={row.label} defaultValue={row.value} disabled={row.disabled} className="block h-[18px] w-full bg-transparent" />}
                  </td>
                  <td className={`border-r border-dotted border-[#aaa] p-0 ${row.active ? 'bg-[#dcdcdc]' : ''}`} />
                </tr>
              </tbody>
            ))}
          </table>
        </div>
        <div className="flex h-[27px] shrink-0 items-center justify-between pr-px pl-[2px] text-[13px]">
          <a href="#help" className="text-[#1b62d6] underline">Properties help</a>
          <button disabled className="h-6 w-[76px] border border-[#bfbfbf] bg-[#cccccc] text-[#888]">Apply</button>
        </div>
      </div>
    </aside>
  );
}

type Pt = [number, number];

interface Station {
  id: number;
  x: number;
  y: number;
  plane?: Pt[];
  extra?: string;
}

const stations: Station[] = [
  { id: 1, x: 533, y: 432, plane: [[520, 350], [588, 398], [547, 482], [479, 433]] },
  { id: 2, x: 633, y: 405, extra: '-18,-37 20,-3 18,37 -20,2' },
  { id: 3, x: 783, y: 219, plane: [[721, 175], [778, 233], [846, 230], [788, 172]] },
  { id: 4, x: 902, y: 386, plane: [[869, 308], [937, 361], [937, 429], [869, 377]] },
  { id: 5, x: 734, y: 512, extra: '-22,-35 22,-3 22,35 -22,3' },
  { id: 6, x: 633, y: 602, plane: [[593, 528], [673, 573], [673, 641], [593, 597]] },
  { id: 7, x: 763, y: 846, plane: [[720, 740], [795, 775], [807, 918], [732, 883]] },
  { id: 8, x: 991, y: 710, extra: '-32,-24 14,-10 32,24 -14,10' },
  { id: 9, x: 1100, y: 412, plane: [[997, 383], [1123, 382], [1204, 407], [1078, 408]] },
];

const curves = [
  'M533 416C575 416 605 407 633 388C690 355 730 300 783 203',
  'M902 369L840 413L734 495C700 520 665 550 633 585',
  'M763 829C850 812 935 760 991 693C1050 630 1095 520 1100 395',
];

const joinPts = (pts: Pt[], dy: number) => pts.map(([x, y]) => `${x},${y + dy}`).join(' ');

function Scene() {
  return (
    <svg viewBox="349 190 1230 709" preserveAspectRatio="xMidYMid slice" className="absolute inset-0 h-full w-full" aria-hidden="true">
      <defs>
        <radialGradient id="cubeShadow"><stop offset="0" stopColor="#3d4f56" stopOpacity=".7" /><stop offset="1" stopColor="#3d4f56" stopOpacity="0" /></radialGradient>
      </defs>
      <g shapeRendering="crispEdges">
        <g stroke="#248a33" strokeDasharray="8 11.400">
          <path d="M411 190 1380 899" />
          <path d="M385 897 1344 190" />
        </g>
        <path d="M348 878v21h29z" fill="#bdbdbd" />
        <path d="M348 878l29 21" stroke="#2aa0d8" />
        {stations.map(s => (
          <g key={s.id} transform={`translate(${s.x} ${s.y})`} fill="#e8f2fa" fillOpacity=".32" stroke="#139bd4" strokeOpacity=".8">
            <polygon points="-31,0 0,-22 31,0 0,23" />
            <polygon points="-16,-26 16,-4 16,26 -16,4" />
            <polygon points="16,-26 -16,-4 -16,26 16,4" />
            {s.extra && <polygon points={s.extra} />}
            <path d="M0 0v23M0 0l-16-11M0 0l16-11M0 0l-16 11M0 0l16 11" />
            <circle r="5" fill="#22bdfb" fillOpacity=".9" stroke="none" />
          </g>
        ))}
        {stations.filter(s => s.plane).map(s => (
          <g key={s.id} fill="#3b6fd6" fillOpacity=".4" stroke="#1648c6" strokeDasharray="11 6">
            <polygon points={joinPts(s.plane!, 0)} />
            <polygon points={joinPts(s.plane!, 17)} />
          </g>
        ))}
        <g fill="none" stroke="#1f4fc4">
          {curves.map(d => <path key={d} d={d} />)}
          {curves.map(d => <path key={d} d={d} transform="translate(0 17)" />)}
        </g>
      </g>
      {stations.map(s => (
        <g key={s.id} transform={`translate(${s.x} ${s.y})`}>
          <path d="M-1 0v-14M1 0v-14" stroke={s.plane ? '#1d5fe0' : '#1489c8'} />
          <circle cy="-17" r="5.500" fill="#07131f" />
          <path d="M-3-19l3 2 3-1M0-17l-1 4" stroke="#15418f" fill="none" />
          <text y="-19" textAnchor="middle" fontSize="11" fontWeight="bold" fill="#05237d">{s.id}</text>
        </g>
      ))}
      <ellipse cx="1527" cy="291" rx="38" ry="24" fill="url(#cubeShadow)" />
      <g stroke="#6c7a80" strokeLinejoin="round">
        <path d="M1527 233l31 19-32 25-31-25z" fill="#a9b6bb" />
        <path d="M1495 252l31 25v27l-27-22z" fill="#9dabb0" />
        <path d="M1558 252l-32 25v27l28-22z" fill="#9dabb0" />
      </g>
      <path d="M1520 272l6-4 6 4-6 5z" fill="#8da3b8" />
      <g fill="#5e6b71" fontWeight="bold" textAnchor="middle">
        <text fontSize="9" transform="translate(1525 256) rotate(33)">TOP</text>
        <text fontSize="7" transform="translate(1510 281) rotate(38)">FRONT</text>
        <text fontSize="7" transform="translate(1543 281) rotate(-36)">RIGHT</text>
      </g>
    </svg>
  );
}

function NavBar() {
  return (
    <div className="absolute top-[131px] right-px flex h-[102px] w-[30px] flex-col items-center rounded-[5px] border-2 border-[#67777e] bg-[#97a7ad]/90 py-[2px]">
      <button aria-label="Close navigation bar" className="flex h-[6px] w-[6px] items-center justify-center self-end rounded-full border border-[#55646a]" />
      <button aria-label="Steering wheel" className="mt-[7px]">
        <svg viewBox="0 0 22 22" className="w-[22px] h-[22px]" fill="none">
          <path d="M9 1h8v9a8 8 0 1 1-8-9z" fill="#c3ccd2" stroke="#707f88" />
          <circle cx="8.500" cy="9" r="3.500" fill="#a9b5bc" stroke="#5c6a72" />
          <path d="M12 14l3-3h7v7l-3 3h-7z" fill="#5b9fdc" stroke="#376f9f" /><path d="M12 14h7v7M19 14l3-3" stroke="#c5e2f8" />
        </svg>
      </button>
      <Caret color="#5c6a72" className="mt-[5px]" />
      <span className="my-[3px] h-px w-[22px] bg-[#64747b]" />
      <button aria-label="Zoom" className="mt-1">
        <svg viewBox="0 0 16 16" className="w-4 h-4" fill="none" stroke="#56646b" strokeWidth="1.200"><path d="M1 1l9 9M10 1 1 10M1 4V1h3M7 1h3v3M1 7v3h3" /><circle cx="11" cy="11" r="3" fill="#bcc8cd" /><path d="M13 13l2.500 2.500" strokeWidth="2" /></svg>
      </button>
      <Caret color="#5c6a72" className="mt-2" />
      <button aria-label="Navigation options" className="mt-auto h-[6px] w-[6px] self-end rounded-full border border-[#55646a]" />
    </div>
  );
}

const viewTools = ['detail', 'visual', 'sun', 'shadow', 'crop', 'cropShow', 'lockView', 'glasses', 'bulb', 'worksheet', 'analytic', 'boxes', 'constrain'];

function Viewport() {
  return (
    <main className="ml-[2px] flex min-w-0 flex-1 flex-col border-l-2 border-[#777] bg-[#f0f0f0] pr-[2px]">
      <div className="flex min-h-0 flex-1">
        <div className="relative flex-1 overflow-hidden bg-linear-to-b from-[#6b8088] to-[#a2b8bf]">
          <Scene />
          <div className="absolute top-2 right-[3px] flex items-center gap-[6px]">
            <button aria-label="Minimize view"><svg viewBox="0 0 10 10" className="w-[10px] h-[10px]"><path d="M0 5.500h10v3H0z" fill="#fff" stroke="#555" strokeWidth=".6" /></svg></button>
            <button aria-label="Restore view"><svg viewBox="0 0 10 10" className="w-[10px] h-[10px]" fill="none" stroke="#fff" strokeWidth="1.500"><path d="M3 3V1h6v6H7M1 3h6v6H1z" /></svg></button>
            <button aria-label="Close view"><svg viewBox="0 0 10 10" className="w-[10px] h-[10px]" stroke="#fff" strokeWidth="2.200"><path d="M1 1l8 8M9 1 1 9" /></svg></button>
          </div>
          <NavBar />
        </div>
        <div className="flex w-[18px] flex-col items-center justify-between py-[6px]">
          <button aria-label="Scroll up"><Chevron dir="up" /></button>
          <span className="h-[18px] w-4 bg-[#cdcdcd]" />
          <button aria-label="Scroll down"><Chevron dir="down" /></button>
        </div>
      </div>
      <div className="flex h-[19px] items-center pl-[11px] text-[12px] text-[#111]">
        <button className="w-[60px] text-left whitespace-nowrap">1/2" = 1'-0"</button>
        <div className="ml-2 flex">
          {viewTools.map(tool => <button key={tool} aria-label={tool} className="flex w-[22px] justify-center"><Icon name={tool} className="w-[15px] h-[15px]" /></button>)}
        </div>
        <button aria-label="Scroll left" className="ml-1"><Chevron dir="left" /></button>
        <div className="flex flex-1 justify-center"><span className="h-[17px] w-[18px] bg-[#cdcdcd]" /></div>
        <button aria-label="Scroll right"><Chevron dir="right" /></button>
        <Grip className="ml-3" />
      </div>
    </main>
  );
}

function Grip({ className = '' }: { className?: string }) {
  return <svg viewBox="0 0 10 10" className={`w-[10px] h-[10px] shrink-0 ${className}`} fill="#b5b5b5"><path d="M7 0h2v2H7zM3.500 3.500h2v2h-2zM7 3.500h2v2H7zM0 7h2v2H0zM3.500 7h2v2h-2zM7 7h2v2H7z" /></svg>;
}

function StatusBar() {
  return (
    <footer className="flex h-[22px] shrink-0 items-center border-t border-[#8a8a8a] bg-linear-to-b from-[#dedede] to-[#b9b9b9] pr-1 pl-px text-[13px] text-[#222]">
      <span className="w-[701px] border-r border-[#d5d5d5]">Click to select, TAB for alternates, CTRL adds, SHIFT unselects.</span>
      <div className="ml-auto flex gap-px">
        {['stLinks', 'stUnder', 'stPin', 'stFace', 'stDrag'].map(name => (
          <button key={name} aria-label={name} className="flex h-[19px] w-[22px] items-center justify-center border border-[#cdcdcd] bg-[#dadada]"><Icon name={name} className="w-[15px] h-[15px]" /></button>
        ))}
      </div>
      <button className="ml-1 flex items-center"><Icon name="stFilter" className="w-[15px] h-[15px]" />:12</button>
      <Grip className="ml-[64px] self-end" />
    </footer>
  );
}

export default function App() {
  return (
    <div className="flex h-screen w-full flex-col overflow-hidden border border-[#afc6e4] bg-[#f0f0f0] font-['Open_Sans',sans-serif]">
      <TitleBar />
      <TabBar />
      <Ribbon />
      <div className="flex h-7 shrink-0 items-center bg-[#d9e4d2] pl-[9px] text-[13px] text-[#111]">
        <span className="w-[179px] border-r-2 border-[#c1ccba] leading-[25px]">Modify | Reference Lines</span>
        <button className="ml-2 h-[26px] border border-[#999] bg-[#f7f7f7] px-1">Activate Dimensions</button>
      </div>
      <div className="flex min-h-0 flex-1 border-t border-[#777]">
        <ProjectBrowser />
        <PropertiesPane />
        <Viewport />
      </div>
      <StatusBar />
    </div>
  );
}
